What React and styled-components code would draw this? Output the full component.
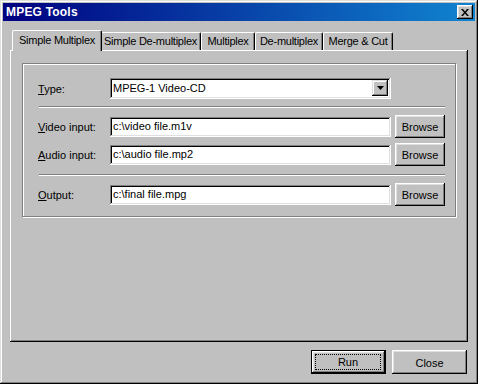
import React from 'react'
import styled, { createGlobalStyle } from 'styled-components'

const GREY = '#c0c0c0'
const DARK = '#808080'
const LIGHT = '#dfdfdf'

const Global = createGlobalStyle`
  html, body {
    margin: 0;
    padding: 0;
    background: ${GREY};
  }
  * { box-sizing: border-box; }
`

const Window = styled.div`
  width: 478px;
  height: 384px;
  background: ${GREY};
  padding: 3px;
  display: flex;
  flex-direction: column;
  font-family: "Liberation Sans", Arial, sans-serif;
  font-size: 11px;
  color: #000;
  box-shadow: inset -1px -1px 0 #000, inset 1px 1px 0 ${LIGHT},
    inset -2px -2px 0 ${DARK}, inset 2px 2px 0 #fff;
`

const TitleBar = styled.div`
  height: 18px;
  display: flex;
  align-items: center;
  justify-content: space-between;
  padding: 0 2px 0 3px;
  background: linear-gradient(90deg, #000080 0%, #1084d0 100%);
`

const Title = styled.span`
  color: #fff;
  font-weight: bold;
  font-size: 12px;
  letter-spacing: 0.2px;
`

const CloseBox = styled.div`
  width: 16px;
  height: 14px;
  background: ${GREY};
  display: flex;
  align-items: center;
  justify-content: center;
  box-shadow: inset -1px -1px 0 #000, inset 1px 1px 0 #fff,
    inset -2px -2px 0 ${DARK}, inset 2px 2px 0 ${LIGHT};
`

const Body = styled.div`
  flex: 1;
  display: flex;
  flex-direction: column;
  padding: 9px 7px 0 7px;
`

const TabStrip = styled.div`
  display: flex;
  align-items: flex-end;
  height: 20px;
  padding-left: 4px;
  position: relative;
  z-index: 1;
`

const Tab = styled.div`
  width: ${p => p.w}px;
  height: ${p => (p.active ? 21 : 18)}px;
  margin: ${p => (p.active ? '0 -2px 0 -2px' : '0')};
  padding-top: ${p => (p.active ? 3 : 2)}px;
  text-align: center;
  letter-spacing: -0.25px;
  background: ${GREY};
  border-top-left-radius: 2px;
  border-top-right-radius: 2px;
  border-top: 1px solid #fff;
  border-left: 1px solid #fff;
  border-right: 1px solid #000;
  box-shadow: inset -1px 0 0 ${DARK};
  white-space: nowrap;
  overflow: hidden;
  position: relative;
  z-index: ${p => (p.active ? 2 : 0)};
  margin-bottom: ${p => (p.active ? '-1px' : '0')};
`

const Panel = styled.div`
  width: 458px;
  height: 292px;
  padding: 13px 0 0 12px;
  box-shadow: inset -1px -1px 0 #000, inset 1px 1px 0 #fff,
    inset -2px -2px 0 ${DARK};
`

const Group = styled.div`
  width: 434px;
  height: 154px;
  border: 1px solid ${DARK};
  box-shadow: 1px 1px 0 #fff, inset 1px 1px 0 #fff;
  padding: 13px 10px 0 15px;
  display: flex;
  flex-direction: column;
`

const Row = styled.div`
  display: flex;
  align-items: center;
  height: 23px;
  margin-bottom: ${p => p.mb || 0}px;
`

const Label = styled.span`
  width: 72px;
  padding-top: 1px;
  u { text-decoration: underline; text-underline-offset: 1px; }
`

const Field = styled.div`
  width: 281px;
  height: 20px;
  background: #fff;
  display: flex;
  align-items: center;
  padding: 0 3px;
  box-shadow: inset 1px 1px 0 ${DARK}, inset -1px -1px 0 ${LIGHT},
    inset 2px 2px 0 #000;
  border-right: 1px solid #fff;
  border-bottom: 1px solid #fff;
`

const Combo = styled(Field)`
  height: 21px;
  justify-content: space-between;
  padding: 2px 2px 2px 3px;
`

const ArrowButton = styled.div`
  width: 16px;
  height: 16px;
  background: ${GREY};
  display: flex;
  align-items: center;
  justify-content: center;
  box-shadow: inset -1px -1px 0 #000, inset 1px 1px 0 ${LIGHT},
    inset -2px -2px 0 ${DARK}, inset 2px 2px 0 #fff;
`

const Separator = styled.div`
  width: 406px;
  height: 2px;
  margin-left: 1px;
  border-top: 1px solid ${DARK};
  border-bottom: 1px solid #fff;
  margin-top: ${p => p.mt}px;
  margin-bottom: ${p => p.mb}px;
`

const Button = styled.div`
  width: ${p => p.w}px;
  height: ${p => p.h}px;
  margin-left: ${p => p.ml || 0}px;
  background: ${GREY};
  display: flex;
  align-items: center;
  justify-content: center;
  padding-top: 1px;
  box-shadow: inset -1px -1px 0 #000, inset 1px 1px 0 #fff,
    inset -2px -2px 0 ${DARK}, inset 2px 2px 0 ${LIGHT};
`

const DefaultButton = styled(Button)`
  border: 1px solid #000;
  padding: 3px;
`

const Focus = styled.div`
  width: 100%;
  height: 100%;
  border: 1px dotted #000;
  display: flex;
  align-items: center;
  justify-content: center;
  margin: 0 1px 1px 0;
`

const Footer = styled.div`
  display: flex;
  justify-content: flex-end;
  padding: 8px 1px 0 0;
`

const Arrow = () => (
  <svg width="7" height="4" viewBox="0 0 7 4">
    <path d="M0 0h7L3.5 4z" fill="#000" />
  </svg>
)

const X = () => (
  <svg width="8" height="7" viewBox="0 0 8 7">
    <path d="M0 0h2l2 2.5L6 0h2L5 3.5 8 7H6L4 4.5 2 7H0l3-3.5z" fill="#000" />
  </svg>
)

const tabs = [
  { name: 'Simple Multiplex', w: 90, active: true },
  { name: 'Simple De-multiplex', w: 101 },
  { name: 'Multiplex', w: 54 },
  { name: 'De-multiplex', w: 68 },
  { name: 'Merge & Cut', w: 70 },
]

const FileRow = ({ accel, rest, value, mb }) => (
  <Row mb={mb}>
    <Label><u>{accel}</u>{rest}</Label>
    <Field>{value}</Field>
    <Button w={50} h={23} ml={4}>Browse</Button>
  </Row>
)

export default function App() {
  return (
    <>
      <Global />
      <Window>
        <TitleBar>
          <Title>MPEG Tools</Title>
          <CloseBox><X /></CloseBox>
        </TitleBar>
        <Body>
          <TabStrip>
            {tabs.map(t => (
              <Tab key={t.name} w={t.w} active={t.active}>{t.name}</Tab>
            ))}
          </TabStrip>
          <Panel>
            <Group>
              <Row>
                <Label><u>T</u>ype:</Label>
                <Combo>
                  MPEG-1 Video-CD
                  <ArrowButton><Arrow /></ArrowButton>
                </Combo>
              </Row>
              <Separator mt={6} mb={7} />
              <FileRow accel="V" rest="ideo input:" value="c:\video file.m1v" mb={5} />
              <FileRow accel="A" rest="udio input:" value="c:\audio file.mp2" />
              <Separator mt={8} mb={7} />
              <FileRow accel="O" rest="utput:" value="c:\final file.mpg" />
            </Group>
          </Panel>
          <Footer>
            <DefaultButton w={75} h={24}><Focus>Run</Focus></DefaultButton>
            <Button w={75} h={24} ml={6}>Close</Button>
          </Footer>
        </Body>
      </Window>
    </>
  )
}
